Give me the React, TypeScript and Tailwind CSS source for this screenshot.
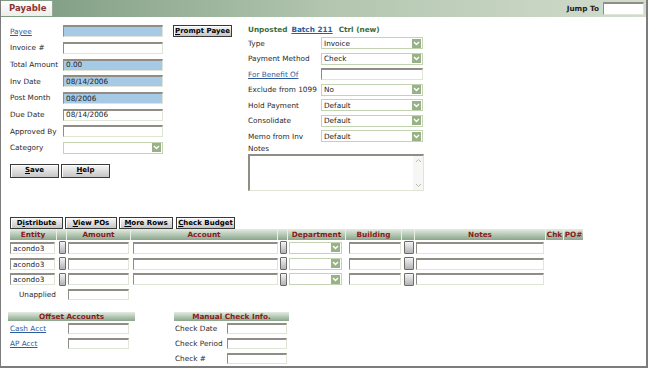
import React from 'react';

const inputBase =
  'flex items-center border-t-2 border-l border-b border-r border-t-[#8f8d85] border-l-[#8f8d85] border-b-[#dfe6d6] border-r-[#dfe6d6] px-[2px] leading-none text-[#222]';

function Box({ className = '', blue, children }: { className?: string; blue?: boolean; children?: React.ReactNode }) {
  return <div className={`${inputBase} ${blue ? 'bg-[#a6cae6]' : 'bg-white'} ${className}`}>{children}</div>;
}

function Chevron() {
  return (
    <div className="flex h-[9px] w-[9px] items-center justify-center bg-[#98b186]">
      <svg width="7" height="5" viewBox="0 0 7 5">
        <path d="M1 1l2.5 2.5L6 1" fill="none" stroke="white" strokeWidth="1.4" />
      </svg>
    </div>
  );
}

function Select({ className = '', value }: { className?: string; value?: string }) {
  return (
    <div className={`flex items-center justify-between border border-[#c3d4b3] bg-white pl-[2px] pr-[1px] text-[#222] ${className}`}>
      <span>{value}</span>
      <Chevron />
    </div>
  );
}

function Btn({ className = '', children }: { className?: string; children: React.ReactNode }) {
  return (
    <div
      className={`flex items-center justify-center whitespace-nowrap border border-[#3a3a3a] bg-linear-to-b from-[#f7f7f7] to-[#c6c6c6] text-[7px] font-bold text-black shadow-[inset_1px_1px_0_#fff] ${className}`}
    >
      {children}
    </div>
  );
}

function Mini({ className = '' }: { className?: string }) {
  return <div className={`h-[13px] rounded-[1px] border border-[#6b6b6b] bg-linear-to-b from-[#f4f4f4] to-[#b3b3b3] ${className}`} />;
}

const headBar = 'flex items-center justify-center whitespace-nowrap bg-linear-to-b from-[#e4ece2] via-[#b6c9b5] to-[#8ba58d] font-bold text-[#8b1a1a]';
const link = 'text-[#2d5d9f] underline';

const LEFT_ROWS = [
  { label: 'Payee', link: true, blue: true, value: '' },
  { label: 'Invoice #', value: '' },
  { label: 'Total Amount', blue: true, value: '0.00' },
  { label: 'Inv Date', blue: true, value: '08/14/2006' },
  { label: 'Post Month', blue: true, value: '08/2006' },
  { label: 'Due Date', value: '08/14/2006' },
  { label: 'Approved By', value: '' },
];

const RIGHT_ROWS: { label: string; select?: string; link?: boolean }[] = [
  { label: 'Type', select: 'Invoice' },
  { label: 'Payment Method', select: 'Check' },
  { label: 'For Benefit Of', link: true },
  { label: 'Exclude from 1099', select: 'No' },
  { label: 'Hold Payment', select: 'Default' },
  { label: 'Consolidate', select: 'Default' },
  { label: 'Memo from Inv', select: 'Default' },
];

function DataRow() {
  return (
    <div className="flex h-[15.8px] items-center">
      <div className="w-[47px]">
        <Box className="h-[12px] w-[45px]">acondo3</Box>
      </div>
      <div className="w-[10px]">
        <Mini className="ml-[2px] w-[7px]" />
      </div>
      <div className="w-[64px]">
        <Box className="ml-[1px] h-[12px] w-[61px]" />
      </div>
      <div className="w-[147px]">
        <Box className="ml-[2px] h-[12px] w-[145px]" />
      </div>
      <div className="w-[10px]">
        <Mini className="ml-[2px] w-[7px]" />
      </div>
      <div className="w-[58px]">
        <Select className="ml-[1px] h-[12px] w-[53px]" />
      </div>
      <div className="w-[56px]">
        <Box className="ml-[3px] h-[12px] w-[52px]" />
      </div>
      <div className="w-[13px]">
        <Mini className="ml-[1.5px] w-[10px]" />
      </div>
      <div className="w-[131px]">
        <Box className="ml-[1px] h-[12px] w-[128px]" />
      </div>
    </div>
  );
}

export default function App() {
  return (
    <div className="h-[370px] w-[650px] bg-white font-['DejaVu_Sans',Verdana,sans-serif] text-[7.3px] leading-none text-[#2a2a2a]">
      <div className="flex h-[368px] w-[648px] flex-col border-l border-r-2 border-b-2 border-[#7c7c7c]">
        {/* header */}
        <div className="flex h-[17px] items-stretch bg-linear-to-r from-[#7b9a80] via-[#b2c5ae] to-[#d2ddcd]">
          <div className="mt-[1px] flex h-[15px] w-[52px] items-center border-r border-[#9aa89a] bg-linear-to-b from-white to-[#eceee9] pl-[8px] text-[8.5px] font-bold text-[#8c3434]">
            Payable
          </div>
          <div className="ml-auto flex items-center gap-[4px] pr-[2px]">
            <span className="font-bold text-[#222]">Jump To</span>
            <Box className="h-[13px] w-[41px]" />
          </div>
        </div>

        {/* top section */}
        <div className="flex h-[200px] pt-[6px]">
          <div className="w-[247px] pl-[9px]">
            {LEFT_ROWS.map((r, i) => (
              <div key={r.label} className="flex h-[16.67px] items-center">
                <div className={`w-[53px] ${r.link ? link : ''}`}>{r.label}</div>
                <Box blue={r.blue} className="h-[12px] w-[100px]">
                  {r.value}
                </Box>
                {i === 0 && (
                  <Btn className="ml-[10px] h-[12px] w-[59px]">
                    <span>
                      <span className="underline">P</span>rompt Payee
                    </span>
                  </Btn>
                )}
              </div>
            ))}
            <div className="flex h-[16.67px] items-center">
              <div className="w-[53px]">Category</div>
              <Select className="h-[12px] w-[100px]" />
            </div>
            <div className="mt-[7.5px] flex gap-[2px]">
              <Btn className="h-[14px] w-[49px]">
                <span>
                  <span className="underline">S</span>ave
                </span>
              </Btn>
              <Btn className="h-[14px] w-[49px]">
                <span>
                  <span className="underline">H</span>elp
                </span>
              </Btn>
            </div>
          </div>

          <div className="flex flex-col">
            <div className="flex h-[12.5px] items-center font-bold">
              <span className="text-[#3b6e3b]">Unposted</span>
              <span className={`ml-[4px] ${link}`}>Batch 211</span>
              <span className="ml-[6px] text-[#3b6e3b]">Ctrl (new)</span>
            </div>
            {RIGHT_ROWS.map((r) => (
              <div key={r.label} className="flex h-[15.5px] items-center">
                <div className={`w-[73px] ${r.link ? link : ''}`}>{r.label}</div>
                {r.select ? (
                  <Select className="h-[12px] w-[102px]" value={r.select} />
                ) : (
                  <Box className="h-[12px] w-[102px]" />
                )}
              </div>
            ))}
            <div className="flex h-[10px] items-center">Notes</div>
            <div className="flex h-[37px] w-[176px] border-t-2 border-l-2 border-b border-r border-t-[#8f8d85] border-l-[#8f8d85] border-b-[#dfe6d6] border-r-[#dfe6d6] bg-white">
              <div className="flex-1" />
              <div className="flex w-[10px] flex-col items-center justify-between bg-[#f6f7f4] py-[2px]">
                <svg width="7" height="5" viewBox="0 0 7 5">
                  <path d="M1 4l2.5-2.5L6 4" fill="none" stroke="#b8bdb4" strokeWidth="1" />
                </svg>
                <svg width="7" height="5" viewBox="0 0 7 5">
                  <path d="M1 1l2.5 2.5L6 1" fill="none" stroke="#b8bdb4" strokeWidth="1" />
                </svg>
              </div>
            </div>
          </div>
        </div>

        {/* bottom section */}
        <div className="flex flex-col pl-[9px]">
          <div className="flex h-[12px] gap-[2px]">
            <Btn className="w-[53px]">
              <span>
                D<span className="underline">i</span>stribute
              </span>
            </Btn>
            <Btn className="w-[52px]">
              <span>
                <span className="underline">V</span>iew POs
              </span>
            </Btn>
            <Btn className="w-[54px]">
              <span>
                <span className="underline">M</span>ore Rows
              </span>
            </Btn>
            <Btn className="ml-[1px] w-[59px]">
              <span>
                <span className="underline">C</span>heck Budget
              </span>
            </Btn>
          </div>

          <div className="flex h-[11px] divide-x divide-[#e9efe7]">
            <div className={`${headBar} w-[47px]`}>Entity</div>
            <div className={`${headBar} w-[10px]`} />
            <div className={`${headBar} w-[64px]`}>Amount</div>
            <div className={`${headBar} w-[147px]`}>Account</div>
            <div className={`${headBar} w-[10px]`} />
            <div className={`${headBar} w-[58px]`}>Department</div>
            <div className={`${headBar} w-[56px]`}>Building</div>
            <div className={`${headBar} w-[13px]`} />
            <div className={`${headBar} w-[131px]`}>Notes</div>
            <div className={`${headBar} w-[18px]`}>Chk</div>
            <div className={`${headBar} w-[19px]`}>PO#</div>
          </div>

          <DataRow />
          <DataRow />
          <DataRow />

          <div className="mt-[1.5px] flex h-[12px] items-center">
            <div className="w-[58px] pl-[9px]">Unapplied</div>
            <Box className="h-[11px] w-[61px]" />
          </div>

          <div className="mt-[11px] flex">
            <div className="ml-[-2px] w-[127px]">
              <div className={`${headBar} h-[9px]`}>Offset Accounts</div>
              <div className="flex h-[15px] items-center pl-[2px]">
                <div className={`w-[58px] ${link}`}>Cash Acct</div>
                <Box className="h-[11px] w-[61px]" />
              </div>
              <div className="flex h-[15px] items-center pl-[2px]">
                <div className={`w-[58px] ${link}`}>AP Acct</div>
                <Box className="h-[11px] w-[61px]" />
              </div>
            </div>
            <div className="ml-[39px] w-[115px]">
              <div className={`${headBar} h-[9px]`}>Manual Check Info.</div>
              <div className="flex h-[15px] items-center pl-[1px]">
                <div className="w-[52px]">Check Date</div>
                <Box className="h-[11px] w-[60px]" />
              </div>
              <div className="flex h-[15px] items-center pl-[1px]">
                <div className="w-[52px]">Check Period</div>
                <Box className="h-[11px] w-[60px]" />
              </div>
              <div className="flex h-[15px] items-center pl-[1px]">
                <div className="w-[52px]">Check #</div>
                <Box className="h-[11px] w-[60px]" />
              </div>
            </div>
          </div>
        </div>
      </div>
    </div>
  );
}
